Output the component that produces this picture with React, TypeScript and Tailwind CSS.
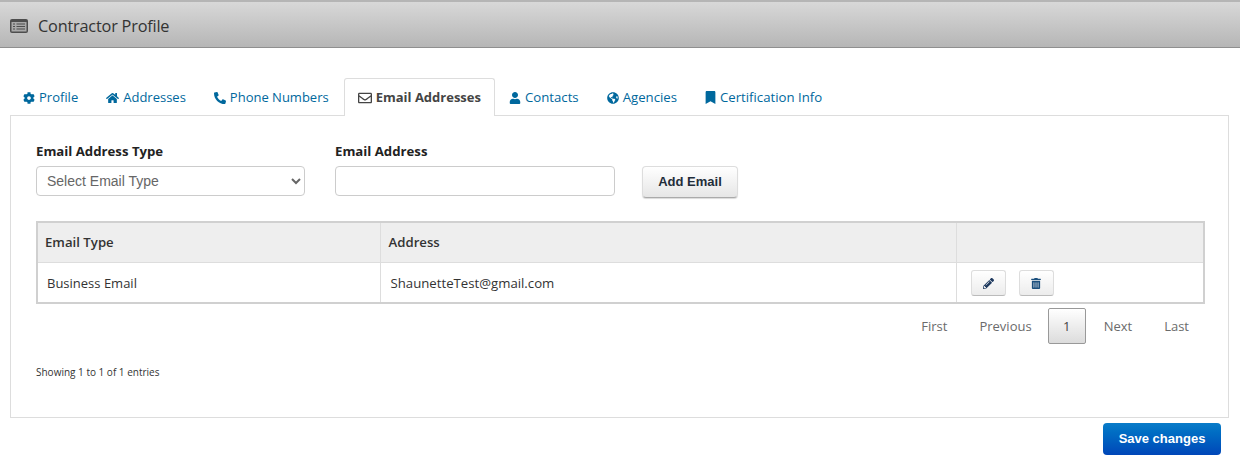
import {
  FaBookmark,
  FaCog,
  FaGlobeAmericas,
  FaHome,
  FaPencilAlt,
  FaPhone,
  FaRegEnvelope,
  FaTrashAlt,
  FaUser,
} from "react-icons/fa";

const tabs = [
  { label: "Profile", icon: FaCog, size: "h-[12px] w-[12px]" },
  { label: "Addresses", icon: FaHome, size: "h-[12px] w-[13px]" },
  { label: "Phone Numbers", icon: FaPhone, size: "h-[12px] w-[12px] -scale-x-100" },
  { label: "Email Addresses", icon: FaRegEnvelope, size: "h-[14px] w-[14px]", active: true },
  { label: "Contacts", icon: FaUser, size: "h-[12px] w-[12px]", wide: true },
  { label: "Agencies", icon: FaGlobeAmericas, size: "h-[12px] w-[12px]", wide: true },
  { label: "Certification Info", icon: FaBookmark, size: "h-[13px] w-[11px]", wide: true },
];

const pagerLink = "px-4 pt-[2px] text-[#6b6b6b]";

// list-alt glyph from the title bar
function ListAltIcon() {
  return (
    <svg viewBox="0 0 18 14" className="h-[14px] w-[18px]">
      <rect width="18" height="14" rx="2" fill="#4d4d4d" />
      <rect x="1.5" y="3" width="15" height="9.5" fill="#a9a9a9" />
      <path d="M3 5h2M3 7.5h2M3 10h2M6.5 5h8.5M6.5 7.5h8.5M6.5 10h8.5" stroke="#4d4d4d" strokeWidth="1.2" />
    </svg>
  );
}

export default function App() {
  return (
    <div className="h-[470px] w-[1240px] overflow-hidden bg-white font-['Open_Sans',sans-serif] text-[13.2px] text-[#333]">
      {/* Page title bar */}
      <div className="flex h-[48px] items-center gap-[10px] border-t-2 border-b border-t-[#b5b5b5] border-b-[#8f8f8f] bg-gradient-to-b from-[#d8d8d8] to-[#b6b6b6] pt-[3px] pl-[10px]">
        <ListAltIcon />
        <span className="text-[16.3px] tracking-[-0.2px] text-[#333]">Contractor Profile</span>
      </div>

      {/* Tabs */}
      <div className="relative z-10 mt-[30px] ml-[9px] flex h-[38px] text-[13px]">
        {tabs.map((tab) => {
          const Icon = tab.icon;
          return (
            <div
              key={tab.label}
              className={
                tab.active
                  ? "ml-px flex h-[38px] items-center gap-[4px] rounded-t-[3px] border border-b-0 border-[#ddd] bg-white px-[13px] pt-px font-bold text-[#444]"
                  : tab.wide
                    ? "flex h-[38px] items-center gap-[4px] px-[14px] pt-px text-[13.2px] text-[#00689d]"
                    : "flex h-[38px] items-center gap-[4px] px-[14px] pt-px text-[#00689d]"
              }
            >
              <Icon className={tab.size} />
              <span>{tab.label}</span>
            </div>
          );
        })}
      </div>

      {/* Panel */}
      <div className="mx-[10px] -mt-px h-[303px] w-[1219px] border border-[#ddd] px-[25px] pt-[26px]">
        <div className="flex items-start">
          <div className="w-[299px]">
            <label className="block h-[24px] leading-[18px] font-bold text-[#222]">Email Address Type</label>
            <select className="h-[30px] w-[269px] rounded-[4px] border border-[#ccc] bg-white pl-[6px] font-['Liberation_Sans',sans-serif] text-[14px] text-[#666]">
              <option>Select Email Type</option>
            </select>
          </div>
          <div className="w-[307px]">
            <label className="block h-[24px] leading-[18px] font-bold text-[#222]">Email Address</label>
            <input className="h-[30px] w-[280px] rounded-[4px] border border-[#ccc] bg-white" />
          </div>
          <button className="mt-[24px] h-[32px] w-[96px] rounded-[4px] border border-[#ddd] border-b-[#aaa] bg-gradient-to-b from-white to-[#e6e6e6] font-['Liberation_Sans',sans-serif] text-[13px] font-bold text-[#1f2d3a] shadow-[0_1px_1px_rgba(0,0,0,0.15)]">
            Add Email
          </button>
        </div>

        <table className="mt-[23px] w-[1169px] table-fixed border-collapse border-2 border-[#d0d0d0]">
          <colgroup>
            <col className="w-[343px]" />
            <col className="w-[576px]" />
            <col />
          </colgroup>
          <thead>
            <tr className="h-[40px] border-b border-[#ddd] bg-[#eee]">
              <th className="border-r border-[#ddd] pt-[2px] pl-[7px] text-left font-semibold text-[#333]">Email Type</th>
              <th className="border-r border-[#ddd] pt-[2px] pl-[8px] text-left font-semibold text-[#333]">Address</th>
              <th />
            </tr>
          </thead>
          <tbody>
            <tr className="h-[41px]">
              <td className="border-r border-[#ddd] pt-[2px] pl-[9px] text-[13px] text-[#333]">Business Email</td>
              <td className="border-r border-[#ddd] pt-[4px] pl-[10px] text-[#333]">ShaunetteTest@gmail.com</td>
              <td className="pt-[2px] pl-[14px]">
                <div className="flex gap-[13px]">
                  <button className="flex h-[26px] w-[35px] items-center justify-center rounded-[3px] border border-[#ddd] border-b-[#bbb] bg-gradient-to-b from-white to-[#ececec]">
                    <FaPencilAlt className="h-[11px] w-[11px] text-[#1f3a5f]" />
                  </button>
                  <button className="flex h-[26px] w-[35px] items-center justify-center rounded-[3px] border border-[#ddd] border-b-[#bbb] bg-gradient-to-b from-white to-[#ececec]">
                    <FaTrashAlt className="h-[11px] w-[10px] text-[#1b4f7d]" />
                  </button>
                </div>
              </td>
            </tr>
          </tbody>
        </table>

        <div className="mt-[4px] flex h-[36px] w-[1169px] items-center justify-end text-[13px]">
          <span className={pagerLink}>First</span>
          <span className={pagerLink}>Previous</span>
          <span className="mr-[2px] flex h-[36px] w-[38px] items-center justify-center rounded-[2px] border border-[#999] bg-gradient-to-b from-white to-[#dcdcdc] pt-[2px] text-[#444]">
            1
          </span>
          <span className={pagerLink}>Next</span>
          <span className={pagerLink}>Last</span>
        </div>

        <div className="mt-[20px] text-[10px] leading-[16px] text-[#333]">Showing 1 to 1 of 1 entries</div>
      </div>

      <div className="mt-[5px] flex justify-end pr-[19px]">
        <button className="h-[32px] w-[118px] rounded-[4px] bg-gradient-to-b from-[#0a7cc8] to-[#0046b8] font-['Liberation_Sans',sans-serif] text-[13px] font-bold text-white">
          Save changes
        </button>
      </div>
    </div>
  );
}
